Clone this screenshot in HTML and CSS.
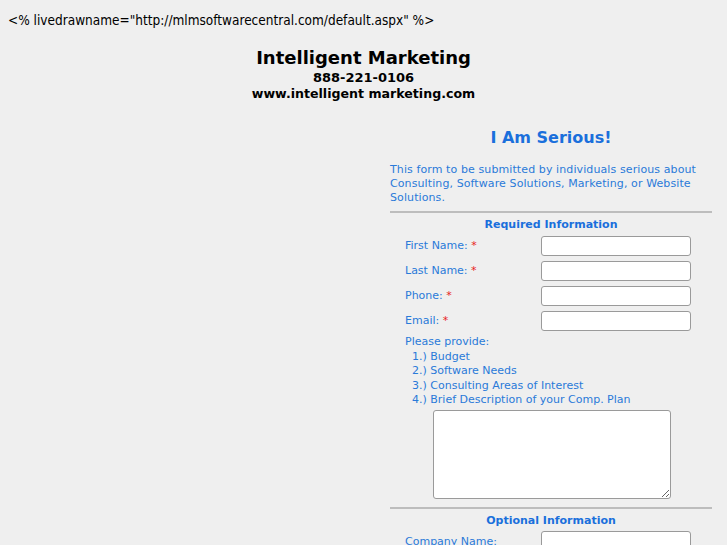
FILE: index.html
```html
<!DOCTYPE html>
<html lang="en">
<head>
  <meta charset="UTF-8" />
  <title>I Am Serious! - Intelligent Marketing</title>
  <link rel="stylesheet" href="styles.css">
</head>
<body>
  <div class="livedraw">&lt;% livedrawname="http://mlmsoftwarecentral.com/default.aspx" %&gt;</div>

  <div class="header">
    <h1>Intelligent Marketing</h1>
    <div class="contact">888-221-0106</div>
    <div class="contact">www.intelligent marketing.com</div>
  </div>

  <div class="layout">
    <div class="left-col"></div>

    <form class="serious-form">
      <h2>I Am Serious!</h2>
      <p class="intro">This form to be submitted by individuals serious about Consulting, Software Solutions, Marketing, or Website Solutions.</p>

      <hr>
      <h3>Required Information</h3>
      <div class="field-row">
        <label>First Name: <span class="req">*</span></label>
        <input type="text">
      </div>
      <div class="field-row">
        <label>Last Name: <span class="req">*</span></label>
        <input type="text">
      </div>
      <div class="field-row">
        <label>Phone: <span class="req">*</span></label>
        <input type="text">
      </div>
      <div class="field-row">
        <label>Email: <span class="req">*</span></label>
        <input type="text">
      </div>

      <div class="provide">
        Please provide:
        <div class="provide-item">1.) Budget</div>
        <div class="provide-item">2.) Software Needs</div>
        <div class="provide-item">3.) Consulting Areas of Interest</div>
        <div class="provide-item">4.) Brief Description of your Comp. Plan</div>
      </div>
      <div class="textarea-wrap">
        <textarea></textarea>
      </div>

      <hr>
      <h3>Optional Information</h3>
      <div class="field-row">
        <label>Company Name:</label>
        <input type="text">
      </div>
    </form>
  </div>
</body>
</html>
```

FILE: styles.css
```css
body {
  margin: 8px;
  background-color: #efefef;
  font-family: 'DejaVu Sans', sans-serif;
  color: #000;
}
.livedraw {
  font-family: 'DejaVu Sans Condensed', 'DejaVu Sans', sans-serif;
  font-size: 13.5px;
  line-height: 16px;
  margin-top: 4px;
}
.header {
  text-align: center;
  margin-top: 18px;
}
.header h1 {
  font-size: 18px;
  font-weight: bold;
  margin: 0;
  line-height: 24px;
}
.contact {
  font-size: 13px;
  font-weight: bold;
  line-height: 16px;
}
.contact + .contact {
  font-size: 12.6px;
}
.layout {
  display: grid;
  grid-template-columns: 1fr 322px;
  padding-right: 7px;
  margin-top: 25px;
}
.serious-form {
  color: #1a6fdc;
  font-size: 11px;
}
.serious-form h2 {
  text-align: center;
  font-size: 16px;
  font-weight: bold;
  margin: 0;
  line-height: 22px;
}
.intro {
  margin: 14px 0 6px;
  line-height: 14px;
  color: #2a7ad9;
  letter-spacing: 0.1px;
}
hr {
  border: none;
  border-top: 2px solid #bdbdbd;
  margin: 0;
}
.serious-form h3 {
  text-align: center;
  font-size: 11px;
  font-weight: bold;
  margin: 5px 0 1px;
  line-height: 14px;
}
.field-row {
  display: grid;
  grid-template-columns: 136px 150px;
  align-items: center;
  padding-left: 15px;
  height: 25px;
}
.field-row label {
  color: #2a7ad9;
}
.req {
  color: #e8201a;
}
.field-row input {
  width: 150px;
  height: 20px;
  box-sizing: border-box;
  border: 1px solid #9a9a9a;
  border-radius: 3px;
  background: #fff;
  margin: 0;
  padding: 1px 3px;
}
.provide {
  padding-left: 15px;
  line-height: 14.5px;
  color: #2a7ad9;
  margin-top: 2px;
}
.provide-item {
  padding-left: 7px;
}
.textarea-wrap {
  padding-left: 43px;
  margin: 2px 0 8px;
}
.textarea-wrap textarea {
  display: block;
  width: 238px;
  height: 89px;
  box-sizing: border-box;
  border: 1px solid #9a9a9a;
  border-radius: 3px;
  background: #fff;
  margin: 0;
}
```
